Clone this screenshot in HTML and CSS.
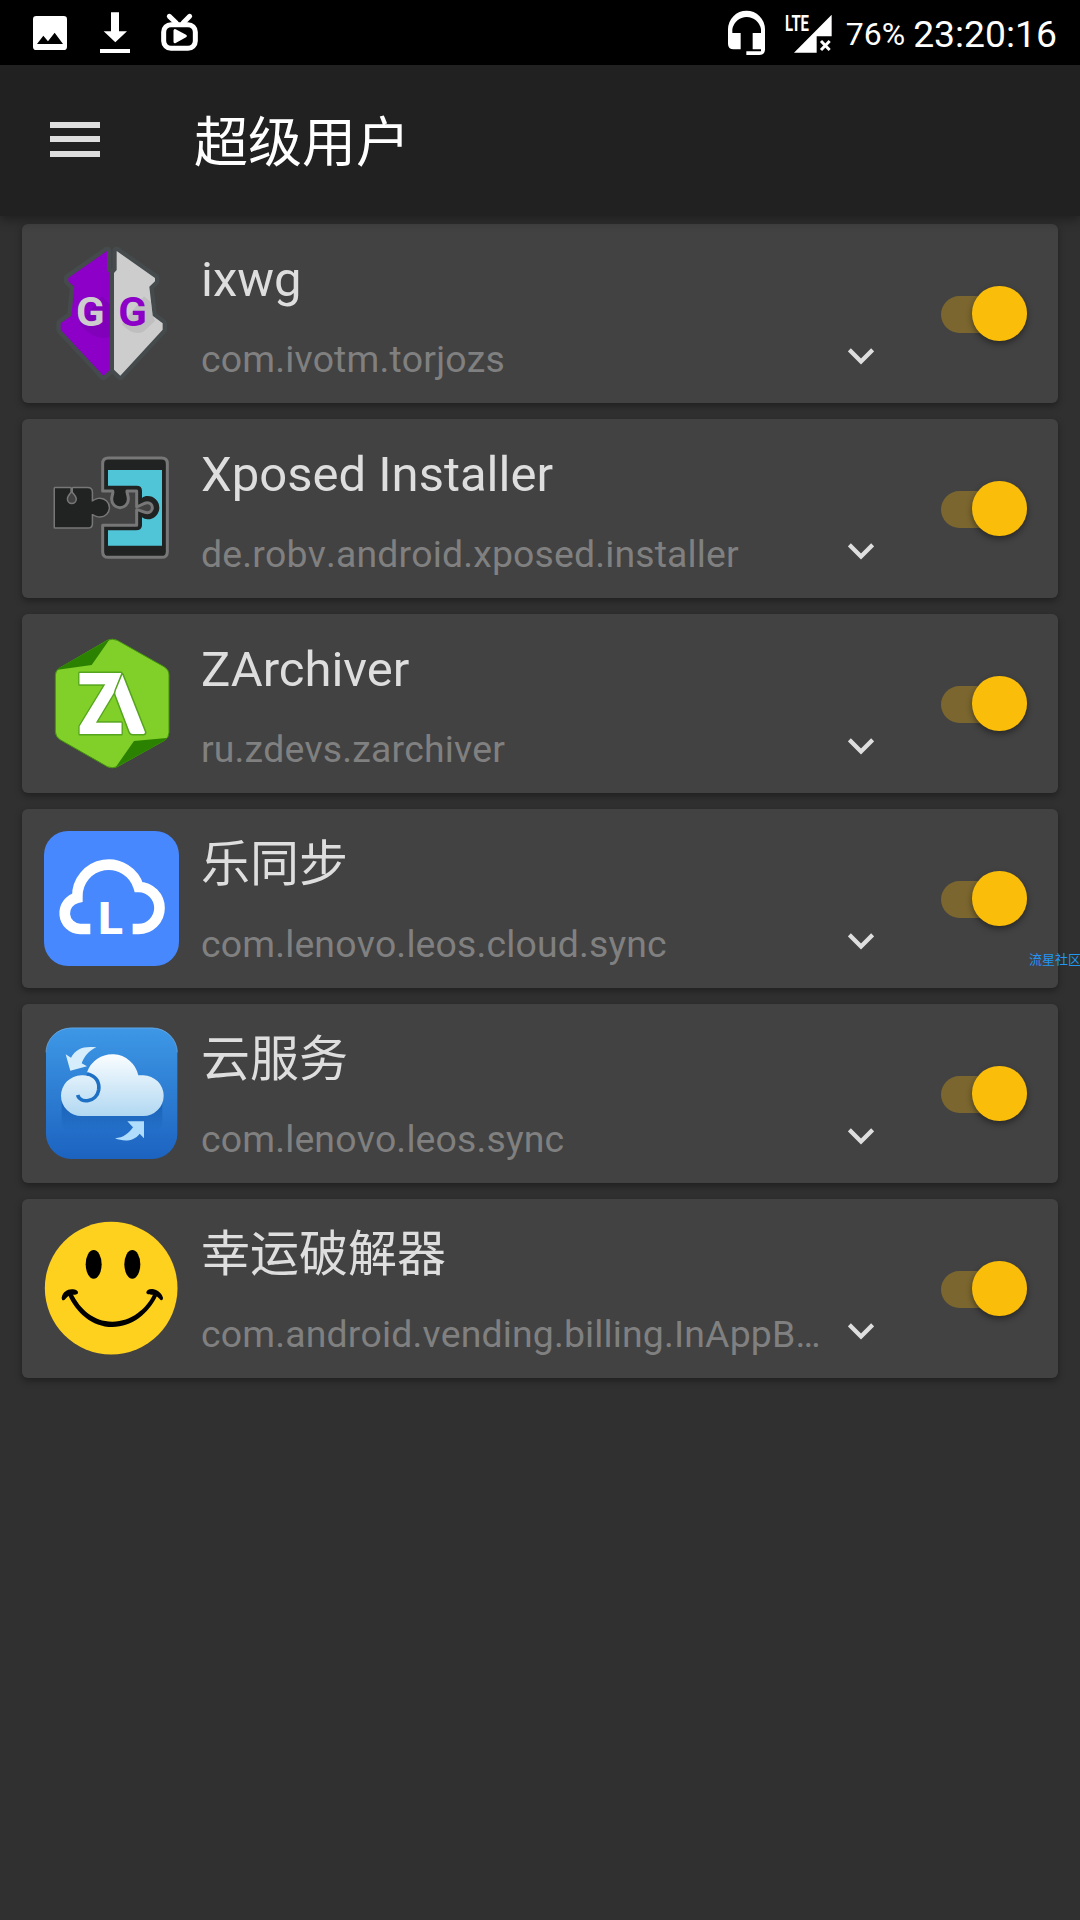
FILE: index.html
```html
<!DOCTYPE html>
<html lang="zh-CN">
<head>
    <meta charset="UTF-8">
    <meta name="viewport" content="width=device-width, initial-scale=1.0">
    <title>超级用户</title>
    <link rel="stylesheet" href="styles.css">
</head>
<body>
    <div class="status-bar">
        <div class="status-left">
            <svg width="34" height="65" viewBox="99 0 102 195">
                <path fill="#fff" fill-rule="evenodd" d="M109 48H191Q201 48 201 58V140Q201 150 191 150H109Q99 150 99 140V58Q99 48 109 48ZM111 132H189L164 98L144 124L130 107Z" />
            </svg>
            <svg width="30" height="65" viewBox="300 0 90 195">
                <path fill="#fff" d="M333 37H357V94H381L346 127L311 94H333ZM300 147H390V159H300Z" />
            </svg>
            <svg width="37" height="65" viewBox="483 0 111 195">
                <rect x="491" y="74" width="95" height="71" rx="22" fill="none" stroke="#fff" stroke-width="15" />
                <path d="M508 49L529 69M569 49L549 69" stroke="#fff" stroke-width="15" stroke-linecap="round" />
                <path d="M525 92V125L556 108Z" fill="#fff" stroke="#fff" stroke-width="9" stroke-linejoin="round" />
            </svg>
        </div>
        <div class="status-right">
            <svg width="37" height="65" viewBox="84 0 111 195">
                <path fill="#fff" d="M84 88A55.500 56 0 0 1 195 88V148Q195 165 178 165H139V154H183V148H158V99H183V88A43.500 44 0 0 0 97 88V99H122V148H101Q84 148 84 131Z" />
            </svg>
            <svg class="signal" width="47" height="65" viewBox="255 0 141 195">
                <text class="lte" x="255" y="92" textLength="72" lengthAdjust="spacingAndGlyphs">LTE</text>
                <path fill="#fff" d="M395 44V109H350V158H282Z" />
                <path d="M363 123L389 150M389 123L363 150" stroke="#fff" stroke-width="9" />
            </svg>
            <span class="battery">76%</span>
            <span class="clock">23:20:16</span>
        </div>
    </div>

    <div class="toolbar">
        <div class="menu-button">
            <span></span>
            <span></span>
            <span></span>
        </div>
        <h1>超级用户</h1>
    </div>

    <div class="app-list">
        <div class="card">
            <svg class="app-icon" viewBox="72 93 405 405">
                <path d="M261 108V165L269 174V466L250 482L122 344V325L154 302L163 215L145 199V189ZM290 108V165L282 174V464L301 482L428 344V325L398 302L388 215L405 199V189Z" fill="#454b4c" stroke="#454b4c" stroke-width="26" stroke-linejoin="round" />
                <path d="M261 108V165L269 174V466L250 482L122 344V325L154 302L163 215L145 199V189Z" fill="#8c00c7" />
                <path d="M290 108V165L282 174V464L301 482L428 344V325L398 302L388 215L405 199V189Z" fill="#cdcdcd" />
                <path d="M245 244L269 268V365Q230 382 178 328Z" fill="#7600ad" opacity=".5" />
                <path d="M372 244L393 262L398 302L405 318L370 350Q340 365 306 328Z" fill="#b2b2b2" opacity=".5" />
                <text class="gg" x="168" y="332" fill="#cdcdcd" textLength="86" lengthAdjust="spacingAndGlyphs">G</text>
                <text class="gg" x="295" y="332" fill="#8c00c7" textLength="86" lengthAdjust="spacingAndGlyphs">G</text>
            </svg>
            <div class="app-info">
                <div class="app-name">ixwg</div>
                <div class="app-detail">
                    <span class="app-package">com.ivotm.torjozs</span>
                    <svg class="chevron" viewBox="84 398 78 50"><path d="M88 403L123 438L158 403" /></svg>
                </div>
            </div>
            <div class="switch"><span class="thumb"></span></div>
        </div>

        <div class="card">
            <svg class="app-icon" viewBox="72 93 405 405">
                <g stroke="#777" stroke-width="9" stroke-linejoin="round" fill="#212322">
                    <path d="M105 235H151V246C145 254 140 259 140 267A15 15 0 0 0 171 267C171 259 165 254 159 246V235H203Q215 235 215 247V275C222 275 225 267 240 267A26 26 0 0 1 240 319C225 319 222 311 215 312V341Q215 352 203 352H105Z" />
                    <path d="M265 144H425Q442 144 442 161V425Q442 442 425 442H265Q248 442 248 425V346H350V299C360 299 370 308 382 308A15 15 0 0 0 382 278C370 278 360 290 350 290V243H321C320 249 325 255 325 268A25 25 0 0 1 275 268C275 255 281 249 278 243H248V161Q248 144 265 144Z" />
                </g>
                <path d="M105 235H151V246C145 254 140 259 140 267A15 15 0 0 0 171 267C171 259 165 254 159 246V235H203Q215 235 215 247V275C222 275 225 267 240 267A26 26 0 0 1 240 319C225 319 222 311 215 312V341Q215 352 203 352H105Z" fill="#212322" />
                <path d="M264 180H426V407H264V361H348Q366 361 366 346V322C371 326 376 328 383 328A34 34 0 0 0 383 258C376 258 371 260 366 264V243Q366 227 350 227H264Z" fill="#50c5d7" />
            </svg>
            <div class="app-info">
                <div class="app-name">Xposed Installer</div>
                <div class="app-detail">
                    <span class="app-package">de.robv.android.xposed.installer</span>
                    <svg class="chevron" viewBox="84 398 78 50"><path d="M88 403L123 438L158 403" /></svg>
                </div>
            </div>
            <div class="switch"><span class="thumb"></span></div>
        </div>

        <div class="card">
            <svg class="app-icon" viewBox="72 93 405 405">
                <path d="M262 106Q277 99 292 106L432 185Q447 194 447 210V382Q447 397 434 406L292 485Q277 492 262 485L120 404Q106 394 106 380V210Q106 197 119 189Z" fill="#81cf29" stroke="#43920f" stroke-width="3" />
                <path d="M268 104L215 180L113 194Q115 190 121 187L260 107ZM286 488L342 408L440 399Q438 404 432 407L294 484Z" fill="#2b8200" />
                <g fill="#fff" stroke="#55a51e" stroke-width="9" stroke-linejoin="round" paint-order="stroke">
                    <text class="za" x="172" y="387" textLength="138" lengthAdjust="spacingAndGlyphs">Z</text>
                    <path d="M307 209L375 382Q375 387 370 387H338Q332 387 329 380L287 270Q285 263 288 256Z" />
                </g>
            </svg>
            <div class="app-info">
                <div class="app-name">ZArchiver</div>
                <div class="app-detail">
                    <span class="app-package">ru.zdevs.zarchiver</span>
                    <svg class="chevron" viewBox="84 398 78 50"><path d="M88 403L123 438L158 403" /></svg>
                </div>
            </div>
            <div class="switch"><span class="thumb"></span></div>
        </div>

        <div class="card">
            <svg class="app-icon" viewBox="72 93 405 405">
                <rect x="72" y="93" width="405" height="405" rx="72" fill="#4788ff" />
                <path d="M211 387H180A47.500 47.500 0 0 1 172 293V290A94 94 0 0 1 356 261A63 63 0 0 1 355 387H338" fill="none" stroke="#fff" stroke-width="32" />
                <text class="cloud-l" x="235" y="403" textLength="74" lengthAdjust="spacingAndGlyphs">L</text>
            </svg>
            <div class="app-info">
                <div class="app-name">乐同步</div>
                <div class="app-detail">
                    <span class="app-package">com.lenovo.leos.cloud.sync</span>
                    <svg class="chevron" viewBox="84 398 78 50"><path d="M88 403L123 438L158 403" /></svg>
                </div>
            </div>
            <div class="switch"><span class="thumb"></span></div>
        </div>

        <div class="card">
            <svg class="app-icon" viewBox="72 93 405 405">
                <defs>
                    <linearGradient id="sky" x1="0" y1="0" x2="0" y2="1">
                        <stop offset="0" stop-color="#3e98e6" />
                        <stop offset="1" stop-color="#1c63c0" />
                    </linearGradient>
                    <linearGradient id="cloud" x1="0" y1="0" x2="0" y2="1">
                        <stop offset="0" stop-color="#fafdff" />
                        <stop offset="1" stop-color="#b1d8f2" />
                    </linearGradient>
                    <linearGradient id="shade" x1="0" y1="0" x2="0" y2="1">
                        <stop offset="0" stop-color="#155bb0" />
                        <stop offset="1" stop-color="#155bb0" stop-opacity="0" />
                    </linearGradient>
                </defs>
                <rect x="78" y="98" width="394" height="394" rx="76" fill="url(#sky)" />
                <path d="M78 172A76 74 0 0 1 154 99H396A76 74 0 0 1 472 172" fill="none" stroke="#70aee5" stroke-width="2" />
                <path d="M125 320H427V380Q427 410 390 410H160Q125 410 125 380Z" fill="url(#shade)" opacity=".8" />
                <path d="M184 363A61 61 0 0 1 184 241Q195 240 205 243L201 232A80 80 0 0 1 355 241H370A61 61 0 0 1 370 363Z" fill="url(#cloud)" />
                <path d="M201 236C230 243 239 263 236 285C230 322 181 327 173 300" fill="none" stroke="#1e70c5" stroke-width="11" />
                <path d="M137 178L153 188C168 160 192 153 229 157C204 169 193 185 185 205L201 214L151 227Z" fill="#d6edfb" />
                <path d="M322 379H372V430L359 416C340 441 310 440 285 430C310 428 326 416 339 397Z" fill="#b0ddfb" />
            </svg>
            <div class="app-info">
                <div class="app-name">云服务</div>
                <div class="app-detail">
                    <span class="app-package">com.lenovo.leos.sync</span>
                    <svg class="chevron" viewBox="84 398 78 50"><path d="M88 403L123 438L158 403" /></svg>
                </div>
            </div>
            <div class="switch"><span class="thumb"></span></div>
        </div>

        <div class="card">
            <svg class="app-icon" viewBox="72 93 405 405">
                <circle cx="273.500" cy="294.500" r="199" fill="#ffd11f" />
                <ellipse cx="221" cy="223" rx="24" ry="43" />
                <ellipse cx="337" cy="223" rx="24" ry="43" />
                <path d="M144 314C168 367 216 411 277 411C337 411 386 369 411 318L400 312C380 356 334 395 277 395C220 395 180 357 158 312Z" />
                <path d="M125 323C128 307 141 298 155 298C168 298 174 302 174 308C173 314 164 314 156 314C145 315 141 321 134 329C129 333 125 330 125 323ZM429 323C424 307 410 298 396 297C385 297 379 302 379 308C381 314 389 313 397 314C409 315 414 321 421 329C426 333 429 329 429 323Z" />
            </svg>
            <div class="app-info">
                <div class="app-name">幸运破解器</div>
                <div class="app-detail">
                    <span class="app-package">com.android.vending.billing.InAppB…</span>
                    <svg class="chevron" viewBox="84 398 78 50"><path d="M88 403L123 438L158 403" /></svg>
                </div>
            </div>
            <div class="switch"><span class="thumb"></span></div>
        </div>
    </div>

    <div class="watermark">流星社区</div>
</body>
</html>
```

FILE: styles.css
```css
body {
    font-family: Roboto, "Noto Sans CJK SC", sans-serif;
    background-color: #303030;
    color: #dedede;
    margin: 0;
    min-height: 1920px;
    position: relative;
    overflow: hidden;
}

svg {
    display: block;
    flex-shrink: 0;
}

.status-bar {
    display: flex;
    justify-content: space-between;
    height: 65px;
    padding: 0 23px 0 33px;
    background-color: #000;
    color: #fff;
}

.status-left {
    display: flex;
    gap: 31px;
}

.status-left svg:first-child {
    margin-right: 2px;
}

.status-right {
    display: flex;
    line-height: 68px;
}

.signal {
    margin: 0 14px 0 20px;
}

.lte {
    font-size: 67px;
    font-weight: bold;
    fill: #fff;
}

.battery {
    font-size: 32px;
    margin-right: 8px;
}

.clock {
    font-size: 37.3px;
}

.toolbar {
    display: flex;
    align-items: center;
    height: 151px;
    padding-left: 50px;
    background-color: #212121;
    box-shadow: 0 4px 10px rgba(0, 0, 0, 0.35);
    position: relative; /* keeps the shadow above the list */
    z-index: 1;
}

.menu-button {
    display: flex;
    flex-direction: column;
    gap: 8.5px;
    width: 50px;
    margin-right: 94px;
    padding-bottom: 3px;
}

.menu-button span {
    height: 6px;
    background-color: #dedede;
}

h1 {
    font-size: 54px;
    font-weight: normal;
    line-height: 80px;
    color: #fff;
    margin: 0;
    padding-top: 7px;
}

.app-list {
    display: flex;
    flex-direction: column;
    gap: 16px;
    padding: 8px 22px;
}

.card {
    display: flex;
    height: 135px;
    padding: 22px 31.5px 22px 22px;
    background-color: #424242;
    border-radius: 6px;
    box-shadow: 0 3px 7px rgba(0, 0, 0, 0.35);
}

.app-icon {
    width: 135px;
    height: 135px;
    margin-right: 22px;
}

.gg {
    font-size: 124px;
    font-weight: bold;
}

.za {
    font-size: 254px;
    font-weight: 900;
}

.cloud-l {
    font-size: 134px;
    font-weight: 900;
    fill: #fff;
}

.app-info {
    flex: 1;
    min-width: 0;
}

.app-name {
    font-size: 49px;
    line-height: 68px;
    height: 66px;
}

.app-detail {
    display: flex;
    justify-content: space-between;
    height: 69px;
}

.app-package {
    font-size: 37.4px;
    line-height: 94px;
    letter-spacing: 0.15px;
    font-kerning: none;
    white-space: nowrap;
    color: #808080;
}

.chevron {
    width: 26px;
    height: 17px;
    margin-top: 35.5px;
}

.chevron path {
    fill: none;
    stroke: #dedede;
    stroke-width: 13;
}

.switch {
    display: flex;
    justify-content: flex-end;
    align-items: center;
    width: 85.5px;
    height: 37px;
    margin: 50px 0 0 67px;
    border-radius: 19px;
    background-color: #7b662f;
}

.thumb {
    width: 54.4px;
    height: 54.4px;
    margin-bottom: 2.3px;
    flex-shrink: 0;
    border-radius: 50%;
    background-color: #fabd09;
    box-shadow: 0 3px 6px rgba(0, 0, 0, 0.4);
}

/* floats over the edge of the list */
.watermark {
    position: absolute;
    top: 951px;
    right: -1px;
    font-size: 13px;
    line-height: 18px;
    color: #2196f3;
}
```
